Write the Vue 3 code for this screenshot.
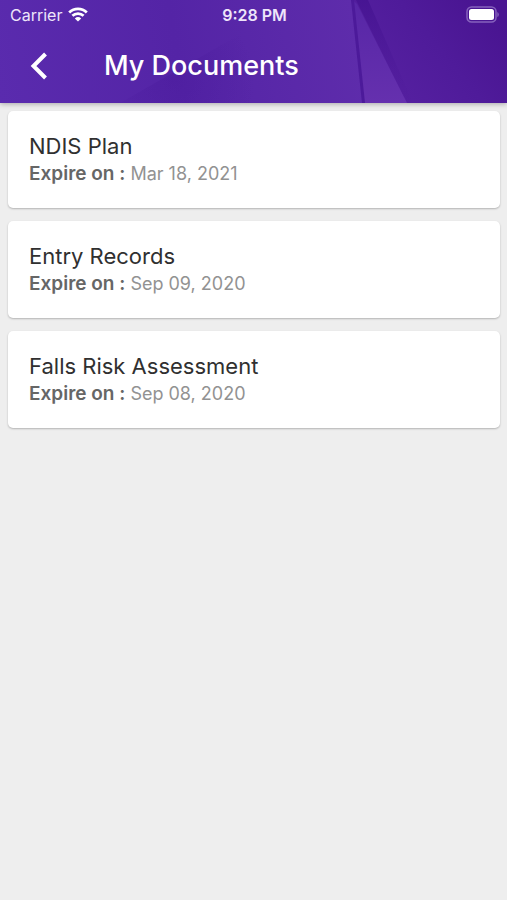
<script setup>
const documents = [
  { name: 'NDIS Plan', expires: 'Mar 18, 2021' },
  { name: 'Entry Records', expires: 'Sep 09, 2020' },
  { name: 'Falls Risk Assessment', expires: 'Sep 08, 2020' },
]
</script>

<template>
  <div class="screen">
    <header class="header">
      <svg class="facets" viewBox="0 0 507 103" preserveAspectRatio="none" aria-hidden="true">
        <defs>
          <linearGradient id="left" gradientUnits="userSpaceOnUse" x1="0" y1="103" x2="360" y2="40">
            <stop offset="0" stop-color="#5a2bae" />
            <stop offset="0.5" stop-color="#5424a6" />
            <stop offset="1" stop-color="#5e2cab" />
          </linearGradient>
          <linearGradient id="right" gradientUnits="userSpaceOnUse" x1="400" y1="103" x2="500" y2="20">
            <stop offset="0" stop-color="#5520a0" />
            <stop offset="0.5" stop-color="#4f1b9a" />
            <stop offset="1" stop-color="#491491" />
          </linearGradient>
          <radialGradient id="shade" gradientUnits="userSpaceOnUse" cx="175" cy="80" r="80">
            <stop offset="0" stop-color="#48189a" stop-opacity="0.4" />
            <stop offset="1" stop-color="#48189a" stop-opacity="0" />
          </radialGradient>
          <linearGradient id="wedge" x1="0" y1="0" x2="0" y2="1">
            <stop offset="0" stop-color="#5726a6" />
            <stop offset="1" stop-color="#6530ae" />
          </linearGradient>
          <linearGradient id="fold" x1="0" y1="0" x2="0" y2="1">
            <stop offset="0" stop-color="#451391" stop-opacity="0.8" />
            <stop offset="1" stop-color="#4c1898" stop-opacity="0" />
          </linearGradient>
        </defs>
        <rect width="507" height="103" fill="url(#left)" />
        <path d="M120 103L265 20V103Z" fill="url(#shade)" />
        <path d="M352 0H507V103H364Z" fill="url(#right)" />
        <path d="M357 4L407 103H363L352 0Z" fill="url(#wedge)" />
        <path d="M351 0H354L365 103H362Z" fill="#4c1a9a" />
        <path d="M356 0H368L413 103H407Z" fill="url(#fold)" />
      </svg>
      <div class="status">
        <span class="carrier">
          Carrier
          <svg class="wifi" viewBox="0 0 20 15" aria-hidden="true">
            <path d="M1.2 5.4C6.2 .6 13.8 .6 18.8 5.4M4.4 8.8C7.6 5.8 12.4 5.8 15.6 8.8" />
            <path class="dot" d="M6.8 11.4Q10 8.8 13.2 11.4L10 14.6Z" />
          </svg>
        </span>
        <span class="clock">9:28 PM</span>
        <svg class="battery" viewBox="0 0 33 17" aria-hidden="true">
          <rect x="1" y="1" width="29" height="15" rx="4.5" />
          <rect class="fill" x="3" y="3" width="25" height="11" rx="2.5" />
          <path class="fill tip" d="M31.3 6Q32.8 6.5 32.8 8.5T31.3 11Z" />
        </svg>
      </div>
      <div class="bar">
        <button class="back" type="button" aria-label="Back">
          <svg viewBox="0 0 18 28" aria-hidden="true"><path d="M15.5 2L3.5 14L15.5 26" /></svg>
        </button>
        <h1>My Documents</h1>
      </div>
    </header>
    <main class="list">
      <article v-for="doc in documents" :key="doc.name" class="card">
        <h2>{{ doc.name }}</h2>
        <p><strong>Expire on :</strong> {{ doc.expires }}</p>
      </article>
    </main>
  </div>
</template>

<style>
body {
  background: #eee;
}
</style>

<style scoped>
.screen {
  min-height: 100vh;
  background: #eee;
  font-family: Inter, "Liberation Sans", sans-serif;
}
.header {
  position: relative;
  color: #fff;
  background: #5525a5;
  box-shadow: 0 1px 5px rgba(0, 0, 0, 0.3);
}
.facets {
  position: absolute;
  inset: 0;
  width: 100%;
  height: 100%;
}
.status {
  position: relative;
  display: grid;
  grid-template-columns: 1fr auto 1fr;
  align-items: center;
  height: 29px;
  padding: 0 8px 0 10px;
  font-size: 16px;
  color: #eee5fa;
}
.carrier {
  display: flex;
  align-items: center;
  gap: 6px;
}
.wifi {
  width: 20px;
  height: 15px;
  fill: none;
  stroke: #fff;
  stroke-width: 2.8;
}
.wifi .dot {
  fill: #fff;
  stroke: none;
}
.clock {
  font-weight: 600;
}
.battery {
  justify-self: end;
  width: 33px;
  height: 17px;
  fill: none;
  stroke: #8661bd;
  stroke-width: 1.5;
}
.battery .fill {
  fill: #fff;
  stroke: none;
}
.battery .tip {
  fill: #8661bd;
}
.bar {
  position: relative;
  display: flex;
  align-items: center;
  gap: 41px;
  height: 74px;
  padding-left: 15px;
}
.back {
  display: grid;
  place-items: center;
  width: 48px;
  height: 48px;
  padding: 0;
  border: 0;
  background: none;
}
.back svg {
  width: 18px;
  height: 28px;
  fill: none;
  stroke: #fff;
  stroke-width: 4;
}
h1 {
  margin: 0;
  font-size: 27px;
  line-height: 34px;
  font-weight: 500;
}
.list {
  display: grid;
  gap: 13px;
  padding: 8px 7px 8px 8px;
}
.card {
  padding: 20px 21px 21px;
  border-radius: 5px;
  background: #fff;
  box-shadow: 0 1px 2px rgba(0, 0, 0, 0.25);
}
h2 {
  margin: 0;
  font-size: 22px;
  line-height: 30px;
  font-weight: 400;
  color: #303030;
}
p {
  margin: 0;
  font-size: 18px;
  line-height: 26px;
  color: #929292;
}
strong {
  font-size: 19px;
  font-weight: 600;
  color: #666;
}
</style>
